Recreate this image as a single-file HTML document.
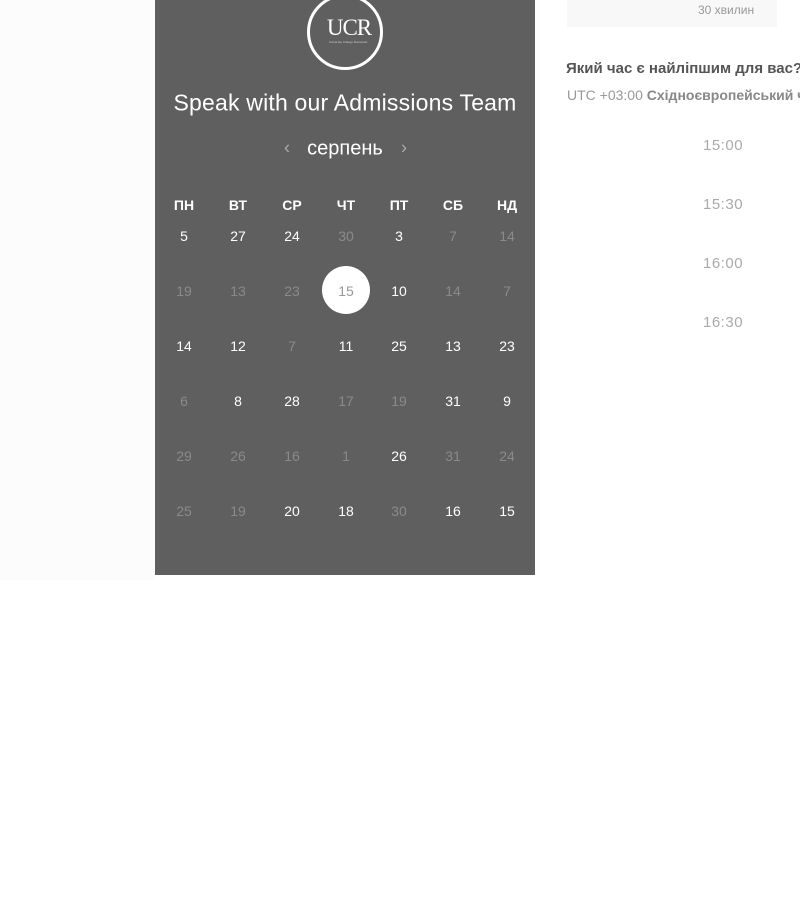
<!DOCTYPE html><html><head><meta charset="utf-8"><style>
body{margin:0;width:800px;height:900px;background:#fff;position:relative;overflow:hidden;font-family:"Liberation Sans",sans-serif}
.p{position:absolute;left:155px;top:0;width:380px;height:575px;background:#5f5f5f}
.a{position:absolute;transform:translate(-50%,-50%);white-space:nowrap}
.w{color:#fff;font-size:14px}.d{color:#8a8a8a;font-size:14px}
.h{color:#fff;font-size:14px;font-weight:bold}
.t{color:#aaa;font-size:15px;position:absolute;left:703px;letter-spacing:0.5px}
</style></head><body>
<div style="position:absolute;left:0;top:0;width:155px;height:580px;background:#fcfcfc"></div>
<div class="p"></div>
<div style="position:absolute;left:307px;top:-6px;width:70px;height:70px;border:3px solid #fff;border-radius:50%"></div>
<div class="a" style="left:349px;top:28px;color:#fff;font-family:'Liberation Serif',serif;font-size:23px;letter-spacing:-1px">UCR</div>
<div class="a" style="left:348px;top:42px;color:#ccc;font-size:3px">University College Roosevelt</div>
<div class="a" style="left:345px;top:103px;color:#fff;font-size:23px;letter-spacing:0.2px">Speak with our Admissions Team</div>
<div class="a" style="left:345px;top:149px;color:#fff;font-size:20px">серпень</div>
<div class="a" style="left:287px;top:148px;color:#aaa;font-size:18px">‹</div>
<div class="a" style="left:404px;top:148px;color:#aaa;font-size:18px">›</div>
<div style="position:absolute;left:322px;top:266px;width:48px;height:48px;border-radius:50%;background:#fff"></div>
<div id="g"></div>
<script>
var xs=[184,238,292,346,399,453,507],ys=[236,291,346,401,456,511];
var hd=["ПН","ВТ","СР","ЧТ","ПТ","СБ","НД"];
var rows=[["5w","27w","24w","30d","3w","7d","14d"],["19d","13d","23d","15s","10w","14d","7d"],["14w","12w","7d","11w","25w","13w","23w"],["6d","8w","28w","17d","19d","31w","9w"],["29d","26d","16d","1d","26w","31d","24d"],["25d","19d","20w","18w","30d","16w","15w"]];
var h="";hd.forEach(function(s,i){h+='<div class="a h" style="left:'+xs[i]+'px;top:205px">'+s+'</div>'});
rows.forEach(function(r,j){r.forEach(function(c,i){var k=c.slice(-1),n=c.slice(0,-1);var cl=k=="s"?'d" style="color:#999;':k+'" style="';h+='<div class="a '+cl+'left:'+xs[i]+'px;top:'+ys[j]+'px">'+n+'</div>'})});
document.getElementById("g").innerHTML=h;
</script>
<div style="position:absolute;left:567px;top:0;width:210px;height:27px;background:#f8f8f8"></div>
<div style="position:absolute;left:698px;top:3px;color:#999;font-size:12px">30 хвилин</div>
<div style="position:absolute;left:566px;top:60px;color:#555;font-size:15px;font-weight:bold;white-space:nowrap">Який час є найліпшим для вас?</div>
<div style="position:absolute;left:567px;top:87px;color:#999;font-size:14px;white-space:nowrap">UTC +03:00 <b style="color:#888">Східноєвропейський час</b></div>
<div class="t" style="top:137px">15:00</div>
<div class="t" style="top:196px">15:30</div>
<div class="t" style="top:255px">16:00</div>
<div class="t" style="top:314px">16:30</div>
</body></html>
